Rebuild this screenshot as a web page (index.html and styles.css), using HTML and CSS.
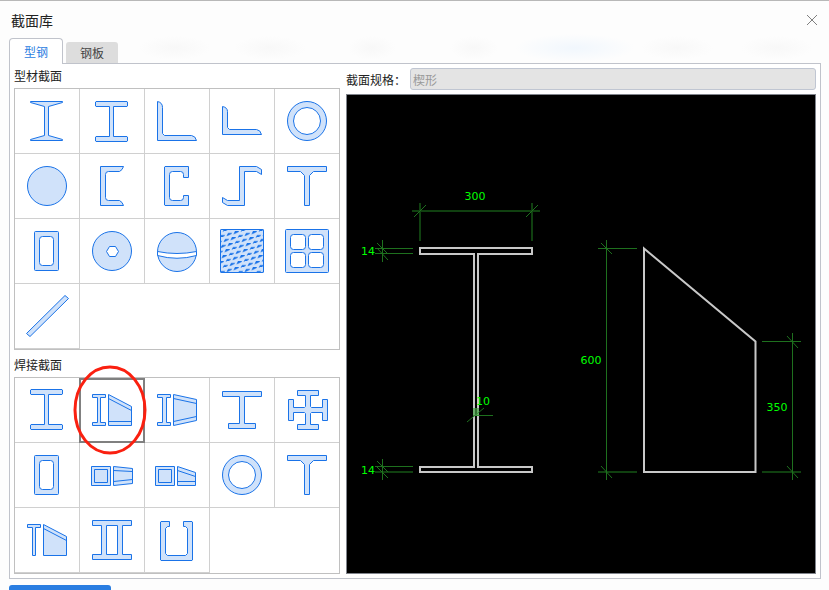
FILE: index.html
```
<!DOCTYPE html>
<html lang="zh-CN">
<head>
	<meta charset="utf-8">
	<title>截面库</title>
	<link rel="stylesheet" href="styles.css">
</head>
<body>
	<div class="dialog">
		<div class="header">
			<h1 class="title">截面库</h1>
			<button class="close" type="button" aria-label="关闭">
				<svg width="12" height="12" viewBox="0 0 12 12"><path d="M1 1L11 11M11 1L1 11"/></svg>
			</button>
		</div>
		<div class="tabs">
			<button class="tab active" type="button">型钢</button>
			<button class="tab" type="button">钢板</button>
		</div>
		<div class="panel">
			<div class="library">
				<h2 class="label">型材截面</h2>
				<div class="grid">
					<button class="cell" type="button" aria-label="工字钢">
						<svg class="icon" viewBox="0 0 64 64"><path d="M15.5 12.5H47.5V13.5L33.5 17.5V46.5L47.5 50.5V51.5H15.5V50.5L29.5 46.5V17.5L15.5 13.5Z"/></svg>
					</button>
					<button class="cell" type="button" aria-label="H型钢">
						<svg class="icon" viewBox="0 0 64 64"><path d="M16 12.5H47L47.5 13V17L47 17.5H33.5V47.5H47L47.5 48V52L47 52.5H16L15.5 52V48L16 47.5H29.5V17.5H16L15.5 17V13Z"/></svg>
					</button>
					<button class="cell" type="button" aria-label="等边角钢">
						<svg class="icon" viewBox="0 0 64 64"><path d="M12.5 12.5Q17.5 13.5 17.5 18.5V44.5L19.5 46.5H46.5Q50.5 47 51.5 51.5H12.5Z"/></svg>
					</button>
					<button class="cell" type="button" aria-label="不等边角钢">
						<svg class="icon" viewBox="0 0 64 64"><path d="M12.5 17.5Q17.5 18.5 17.5 22.5V38.5L19.5 40.5H46.5Q50.5 41 51.5 45.5H12.5Z"/></svg>
					</button>
					<button class="cell" type="button" aria-label="圆管">
						<svg class="icon" viewBox="0 0 64 64"><circle cx="32" cy="32" r="19.5"/><circle class="hole" cx="32" cy="32" r="13.5"/></svg>
					</button>
					<button class="cell" type="button" aria-label="圆钢">
						<svg class="icon" viewBox="0 0 64 64"><circle cx="32" cy="32" r="19.5"/></svg>
					</button>
					<button class="cell" type="button" aria-label="槽钢">
						<svg class="icon" viewBox="0 0 64 64"><path d="M20.5 12.5H43.5Q42.5 16 39.5 17.5H28.5Q25.5 17.5 25.5 20.5V43.5Q25.5 46.5 28.5 46.5H39.5Q42.5 48 43.5 51.5H20.5Z"/></svg>
					</button>
					<button class="cell" type="button" aria-label="C型钢">
						<svg class="icon" viewBox="0 0 64 64"><path d="M20 12.5H43.5V23.5H38.5V20.5Q38.5 17.5 35.5 17.5H27.5Q24.5 17.5 24.5 20.5V43.5Q24.5 46.5 27.5 46.5H35.5Q38.5 46.5 38.5 43.5V41.5H43.5V51.5H20L19.5 51V13Z"/></svg>
					</button>
					<button class="cell" type="button" aria-label="Z型钢">
						<svg class="icon" viewBox="0 0 64 64"><path d="M29.5 12.5H46.5L51.5 15.5V20.5L46.5 17.5H34.5V51.5H17.5L12.5 48.5V43.5L17.5 46.5H29.5Z"/></svg>
					</button>
					<button class="cell" type="button" aria-label="T型钢">
						<svg class="icon" viewBox="0 0 64 64"><path d="M12.5 12.5H51.5V17.5H38.5L34.5 21.5V51.5H29.5V21.5L25.5 17.5H12.5Z"/></svg>
					</button>
					<button class="cell" type="button" aria-label="矩形管">
						<svg class="icon" viewBox="0 0 64 64"><rect x="19.5" y="12.5" width="24" height="39" rx="1"/><rect class="hole" x="24.5" y="17.5" width="14" height="29" rx="3"/></svg>
					</button>
					<button class="cell" type="button" aria-label="螺栓球">
						<svg class="icon" viewBox="0 0 64 64"><circle cx="32" cy="32" r="19.5"/><path class="hole" d="M26.5 32.5L29.5 27.5H35.5L38.5 32.5L35.5 37.5H29.5Z"/></svg>
					</button>
					<button class="cell" type="button" aria-label="焊接球">
						<svg class="icon" viewBox="0 0 64 64"><circle cx="32" cy="33" r="19.5"/><path class="hole" d="M12.5 32.5Q32 36.5 51.5 32.5V36.5Q32 42 12.5 36.5Z"/></svg>
					</button>
					<button class="cell" type="button" aria-label="混凝土">
						<svg class="icon" viewBox="0 0 64 64">
							<defs>
								<pattern id="speckle" width="18" height="6" patternUnits="userSpaceOnUse" patternTransform="matrix(1 0 -0.5 1 0 0)">
									<path class="speck" d="M1 4H5V5L4 6H1ZM1 0H2L1 1ZM7 2H11V3L8 5H7ZM13 0H17V1L14 3H13Z"/>
								</pattern>
							</defs>
							<rect x="10.5" y="10.5" width="43" height="43" rx="1"/>
							<rect class="speckled" x="10.5" y="10.5" width="43" height="43" rx="1"/>
						</svg>
					</button>
					<button class="cell" type="button" aria-label="多孔截面">
						<svg class="icon" viewBox="0 0 64 64"><rect x="10.5" y="10.5" width="43" height="43" rx="1"/><g class="hole"><rect x="15.5" y="15.5" width="15" height="15" rx="3"/><rect x="33.5" y="15.5" width="15" height="15" rx="3"/><rect x="15.5" y="33.5" width="15" height="15" rx="3"/><rect x="33.5" y="33.5" width="15" height="15" rx="3"/></g></svg>
					</button>
					<button class="cell" type="button" aria-label="拉索">
						<svg class="icon" viewBox="0 0 64 64"><path d="M11.5 49.5L50 11.5L53.5 14.5L15 52.5Z"/></svg>
					</button>
				</div>

				<h2 class="label second">焊接截面</h2>
				<div class="grid">
					<button class="cell" type="button" aria-label="焊接H型">
						<svg class="icon" viewBox="0 0 64 64"><path d="M16 11.5H47L47.5 12V16L47 16.5H33.5V46.5H47L47.5 47V51L47 51.5H16L15.5 51V47L16 46.5H29.5V16.5H16L15.5 16V12Z"/></svg>
					</button>
					<button class="cell selected" type="button" aria-label="楔形">
						<svg class="icon" viewBox="0 0 64 64"><path d="M12.5 16.5H25.5V19.5H20.5V44.5H25.5V47.5H12.5V44.5H17.5V19.5H12.5ZM28.5 16.5L51.5 28.5V47.5H28.5ZM28.5 20.5L51.5 32.5M28.5 43.5H51.5"/></svg>
						<svg class="marker" viewBox="0 0 74 90"><ellipse cx="37" cy="45" rx="35" ry="43"/></svg>
					</button>
					<button class="cell" type="button" aria-label="双坡楔形">
						<svg class="icon" viewBox="0 0 64 64"><path d="M12.5 16.5H25.5V19.5H21.5V44.5H25.5V47.5H12.5V44.5H17.5V19.5H12.5ZM28.5 16.5L51.5 21.5V42.5L28.5 47.5ZM28.5 20.5L51.5 25.5M28.5 43.5L51.5 38.5"/></svg>
					</button>
					<button class="cell" type="button" aria-label="不等翼缘H型">
						<svg class="icon" viewBox="0 0 64 64"><path d="M12.5 13.5H51.5V18.5H34.5V45.5H45.5V50.5H18.5V45.5H29.5V18.5H12.5Z"/></svg>
					</button>
					<button class="cell" type="button" aria-label="十字形">
						<svg class="icon" viewBox="0 0 64 64"><path d="M22.5 12.5H43.5V17.5H35.5V28.5L36.5 29.5H47.5V21.5H52.5V42.5H47.5V34.5H36.5L35.5 35.5V46.5H43.5V51.5H22.5V46.5H30.5V35.5L29.5 34.5H18.5V42.5H13.5V21.5H18.5V29.5H29.5L30.5 28.5V17.5H22.5Z"/></svg>
					</button>
					<button class="cell" type="button" aria-label="箱形">
						<svg class="icon" viewBox="0 0 64 64"><rect x="19.5" y="12.5" width="24" height="39" rx="1"/><rect class="hole" x="24.5" y="17.5" width="14" height="29" rx="3"/></svg>
					</button>
					<button class="cell" type="button" aria-label="双坡变截面箱形">
						<svg class="icon" viewBox="0 0 64 64"><path d="M11.5 23.5H30.5V42.5H11.5ZM14.5 26.5H27.5V39.5H14.5ZM33.5 23.5L52.5 25.5V40.5L33.5 42.5ZM33.5 27.5L52.5 28.5M33.5 38.5L52.5 36.5"/></svg>
					</button>
					<button class="cell" type="button" aria-label="变截面箱形">
						<svg class="icon" viewBox="0 0 64 64"><path d="M10.5 23.5H29.5V42.5H10.5ZM13.5 26.5H26.5V39.5H13.5ZM32.5 23.5L50.5 29.5V42.5H32.5ZM32.5 27.5L50.5 33.5M32.5 38.5H50.5"/></svg>
					</button>
					<button class="cell" type="button" aria-label="焊接圆管">
						<svg class="icon" viewBox="0 0 64 64"><circle cx="32" cy="32" r="19.5"/><circle class="hole" cx="32" cy="32" r="13.5"/></svg>
					</button>
					<button class="cell" type="button" aria-label="焊接T型">
						<svg class="icon" viewBox="0 0 64 64"><path d="M12.5 12.5H51.5V17.5H38.5L34.5 21.5V51.5H29.5V21.5L25.5 17.5H12.5Z"/></svg>
					</button>
					<button class="cell" type="button" aria-label="变截面T型">
						<svg class="icon" viewBox="0 0 64 64"><path d="M12.5 16.5H25.5V19.5H20.5V47.5H17.5V19.5H12.5ZM28.5 16.5L51.5 28.5V47.5H28.5ZM28.5 20.5L51.5 32.5"/></svg>
					</button>
					<button class="cell" type="button" aria-label="双腹板H型">
						<svg class="icon" viewBox="0 0 64 64"><path fill-rule="evenodd" d="M12.5 12.5H51.5V17.5H42.5V46.5H51.5V51.5H12.5V46.5H21.5V17.5H12.5ZM26.5 17.5V46.5H37.5V17.5Z"/></svg>
					</button>
					<button class="cell" type="button" aria-label="卷边槽形">
						<svg class="icon" viewBox="0 0 64 64"><path d="M16 13.5H24.5V18.5H22.5L20.5 20.5V45.5L22.5 47.5H40.5L42.5 45.5V20.5L40.5 18.5H38.5V13.5H47L47.5 14V52L47 52.5H16L15.5 52V14Z"/></svg>
					</button>
				</div>
			</div>

			<div class="detail">
				<div class="field">
					<label for="spec">截面规格：</label>
					<input class="spec" type="text" id="spec" value="楔形" disabled>
				</div>
				<div class="preview">
					<svg viewBox="0 0 468 478">
						<!-- H section -->
						<path class="outline" d="M73 153H185V159H131V372H185V377H73V372H127V159H73Z"/>
						<!-- wedge elevation -->
						<path class="outline" d="M297 153.5L408.5 246.5V377H297Z"/>
						<!-- extension lines -->
						<path class="ext" d="M73 108V146M185 108V146M28 377H66M251 377H290M415 377H454M65 116H193"/>
						<!-- dimension lines -->
						<path class="dim" d="M28 153.5H66M28 158.5H66M35.5 145V167M28 371.5H66M35.5 364V385M126 320.5H146M251 153.5H290M259.5 145V385M415 246.5H454M445.5 238V385"/>
						<path class="tick" d="M67 122L79 110M179 122L191 110M30 148L41 159M30 153L41 165M30 366L41 377M30 372L41 383M120 327L137 313M254 148L265 159M254 371L265 383M440 241L451 253M440 371L451 383"/>
						<rect class="mark" x="126" y="313" width="6" height="8"/>
						<g class="value">
							<text x="128" y="105">300</text>
							<text x="21" y="160">14</text>
							<text x="21" y="379">14</text>
							<text x="136" y="310">10</text>
							<text x="244" y="269">600</text>
							<text x="430" y="316">350</text>
						</g>
					</svg>
				</div>
			</div>
		</div>
		<div class="footer">
			<button class="confirm" type="button" aria-label="确定"></button>
		</div>
	</div>
</body>
</html>
```
FILE: styles.css
```
body {
	margin: 0;
	height: 100vh;
	overflow: hidden;
	font-family: "Noto Sans CJK SC", sans-serif;
	font-size: 12px;
	color: #222;
	background-color: #fdfdfd;
}

button, input {
	font-family: inherit;
	font-size: inherit;
}

button {
	margin: 0;
	padding: 0;
	border: none;
	background: none;
	cursor: pointer;
}

.dialog {
	padding: 0 8px 0 9px;
	border-top: 1px solid #b8b8b8;
	background-image:
		radial-gradient(ellipse 60px 14px at 575px 47px, #f1f7fd, transparent),
		radial-gradient(ellipse 36px 12px at 175px 47px, #f8f8f8, transparent),
		radial-gradient(ellipse 36px 12px at 270px 47px, #f8f8f8, transparent),
		radial-gradient(ellipse 24px 12px at 372px 47px, #f8f8f8, transparent),
		radial-gradient(ellipse 24px 12px at 474px 47px, #f8f8f8, transparent),
		radial-gradient(ellipse 36px 12px at 677px 47px, #f8f8f8, transparent),
		radial-gradient(ellipse 36px 12px at 777px 47px, #f8f8f8, transparent);
}

.header {
	display: flex;
	align-items: center;
	justify-content: space-between;
	height: 37px;
	padding: 0 3px 0 2px;
}

.title {
	margin: 0;
	font-size: 14px;
	font-weight: normal;
}

.close {
	display: flex;
}

.close svg {
	fill: none;
	stroke: #808080;
}

.tabs {
	display: flex;
	align-items: flex-end;
	gap: 3px;
}

.tab {
	width: 52px;
	height: 21px;
	border-radius: 3px 3px 0 0;
	background-color: #ddd;
	color: #444;
}

/* covers the top border of the panel */
.tab.active {
	position: relative;
	box-sizing: border-box;
	width: 54px;
	height: 26px;
	margin-bottom: -1px;
	border: 1px solid #c0c3cb;
	border-bottom: none;
	border-radius: 4px 4px 0 0;
	background-color: white;
	color: #2a7de1;
}

.panel {
	display: flex;
	gap: 6px;
	padding: 0 4px 4px;
	border: 1px solid #c0c3cb;
	background-color: white;
}

.label {
	margin: 0;
	font-size: 12px;
	line-height: 24px;
	font-weight: normal;
}

.label.second {
	margin-top: 3px;
}

.grid {
	display: grid;
	grid-template-columns: repeat(4, 65px) 64px;
	border: 1px solid #c0c0c0;
}

.cell {
	position: relative;
	box-sizing: border-box;
	height: 65px;
	border-right: 1px solid #d0d0d0;
	border-bottom: 1px solid #d0d0d0;
}

.cell:nth-child(5n) {
	border-right: none;
}

.cell.selected {
	z-index: 1;
}

.cell.selected::before {
	content: "";
	position: absolute;
	inset: 0 -1px -1px;
	border: 2px solid #808080;
}

.icon {
	display: block;
	width: 64px;
	height: 64px;
	fill: #d0e2fa;
	stroke: #1a73e8;
}

.hole {
	fill: white;
}

.speck {
	fill: #1a73e8;
	stroke: none;
}

.speckled {
	fill: url(#speckle);
}

.marker {
	position: absolute;
	top: -13px;
	left: -7px;
	width: 74px;
	height: 90px;
	fill: none;
	stroke: #fa2010;
	stroke-width: 3;
	pointer-events: none;
}

.detail {
	display: flex;
	flex-direction: column;
	flex: 1;
	gap: 4px;
	padding-top: 4px;
}

.field {
	display: flex;
	align-items: center;
	gap: 4px;
}

.spec {
	box-sizing: border-box;
	flex: 1;
	min-width: 0;
	height: 22px;
	padding: 0 2px;
	border: 1px solid #c0c6d2;
	border-radius: 3px;
	background-color: #e4e4e4;
	color: #999;
}

.preview {
	flex: 1;
	border: 1px solid #80848c;
	background-color: black;
}

.preview svg {
	display: block;
	width: 100%;
	height: 100%;
	fill: none;
}

.outline {
	stroke: #c8c8c8;
	stroke-width: 2;
}

.ext {
	stroke: #104010;
	stroke-width: 2;
}

.dim {
	stroke: #1e701e;
}

.tick {
	stroke: #1e701e;
}

.mark {
	fill: #40a040;
	fill-opacity: 0.7;
}

.value {
	fill: #00ff00;
	font-family: "DejaVu Sans", sans-serif;
	font-size: 11px;
	text-anchor: middle;
}

.footer {
	padding-top: 6px;
}

.confirm {
	width: 102px;
	height: 28px;
	border-radius: 3px;
	background-color: #2a7de1;
}
```
